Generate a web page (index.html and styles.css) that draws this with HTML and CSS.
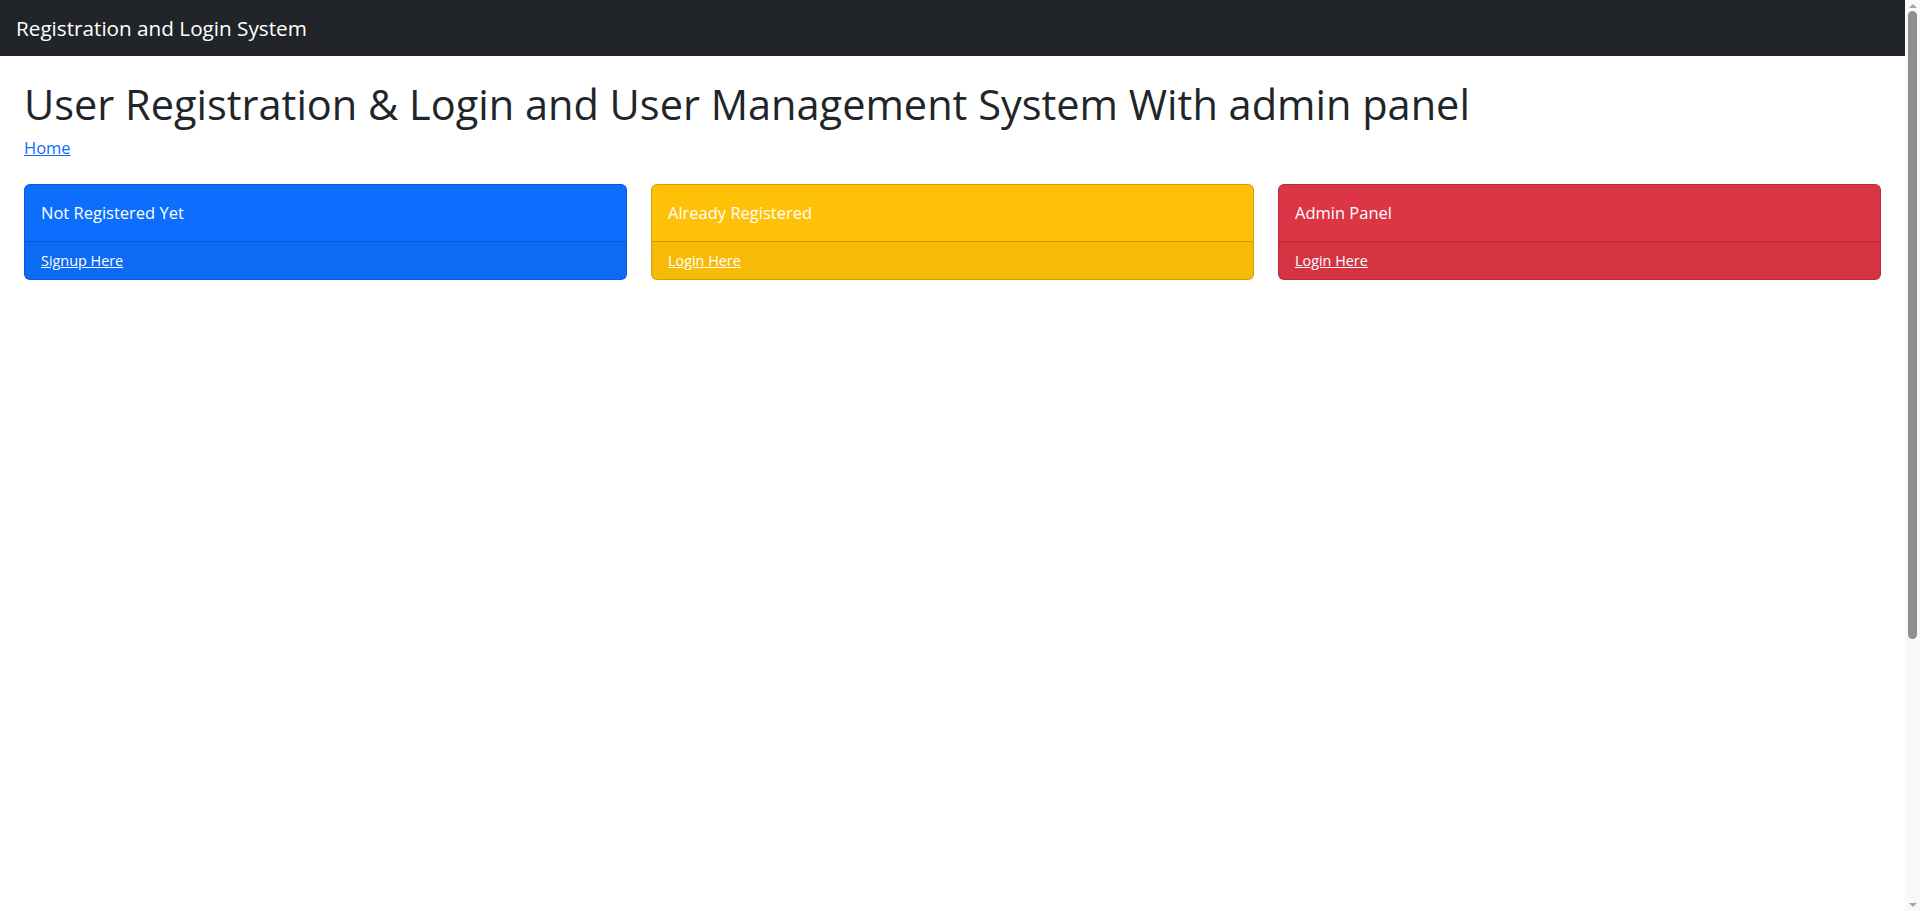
FILE: index.html
```html
<!DOCTYPE html>
<html lang="en">
<head>
<meta charset="utf-8">
<title>Registration and Login System</title>
<link rel="stylesheet" href="styles.css">
</head>
<body>
<div class="shell">
  <div class="page">
    <nav class="topnav">
      <a class="brand" href="#">Registration and Login System</a>
    </nav>
    <main class="content">
      <h1 class="title">User Registration &amp; Login and User Management System With admin panel</h1>
      <div class="crumbs"><a href="#">Home</a></div>
      <div class="cards">
        <div class="card card-primary">
          <div class="card-body">Not Registered Yet</div>
          <div class="card-footer"><a href="#">Signup Here</a></div>
        </div>
        <div class="card card-warning">
          <div class="card-body">Already Registered</div>
          <div class="card-footer"><a href="#">Login Here</a></div>
        </div>
        <div class="card card-danger">
          <div class="card-body">Admin Panel</div>
          <div class="card-footer"><a href="#">Login Here</a></div>
        </div>
      </div>
    </main>
  </div>
  <div class="scrollbar" aria-hidden="true">
    <span class="arrow arrow-up"></span>
    <span class="thumb"></span>
    <span class="arrow arrow-down"></span>
  </div>
</div>
</body>
</html>
```
FILE: styles.css
```css
* { box-sizing: border-box; }
html, body { margin: 0; padding: 0; }
body {
  font-family: "Open Sans", "Noto Sans", sans-serif;
  font-size: 16.5px;
  line-height: 24px;
  color: #212529;
  background: #fff;
  overflow: hidden;
}
.shell {
  display: flex;
  height: 100vh;
}
.page {
  flex: 1;
  min-width: 0;
}
.topnav {
  height: 56px;
  background: #212529;
  display: flex;
  align-items: center;
  padding: 0 16px;
}
.brand {
  color: #fff;
  font-size: 20.7px;
  line-height: 30px;
  text-decoration: none;
}
.content {
  padding: 0 24px;
}
.title {
  margin: 24px 0 8px;
  font-size: 41.5px;
  line-height: 48px;
  font-weight: 400;
}
.crumbs {
  margin-bottom: 24px;
  line-height: 24px;
}
.crumbs a { color: #0d6efd; }
.cards {
  display: grid;
  grid-template-columns: repeat(3, 1fr);
  gap: 24px;
}
.card {
  border: 1px solid rgba(0,0,0,.175);
  border-radius: 6px;
  color: #fff;
  overflow: hidden;
}
.card-primary { background: #0d6efd; }
.card-warning { background: #ffc107; }
.card-danger { background: #dc3545; }
.card-body {
  padding: 16px;
  line-height: 24px;
}
.card-footer {
  border-top: 1px solid rgba(0,0,0,.175);
  background: rgba(0,0,0,.03);
  padding: 8px 16px;
  font-size: 14.4px;
  line-height: 21px;
}
.card-footer a { color: #fff; }

.scrollbar {
  width: 15px;
  height: 100%;
  background: #f9f9f9;
  display: flex;
  flex-direction: column;
  align-items: center;
  padding: 4px 0;
}
.arrow {
  width: 0;
  height: 0;
  border-left: 4px solid transparent;
  border-right: 4px solid transparent;
}
.arrow-up { border-bottom: 4px solid #a3a3a3; }
.arrow-down { border-top: 4px solid #a3a3a3; margin-top: auto; }
.thumb {
  width: 9px;
  height: 628px;
  margin-top: 3px;
  background: #8f8f8f;
  border-radius: 5px;
}
```
